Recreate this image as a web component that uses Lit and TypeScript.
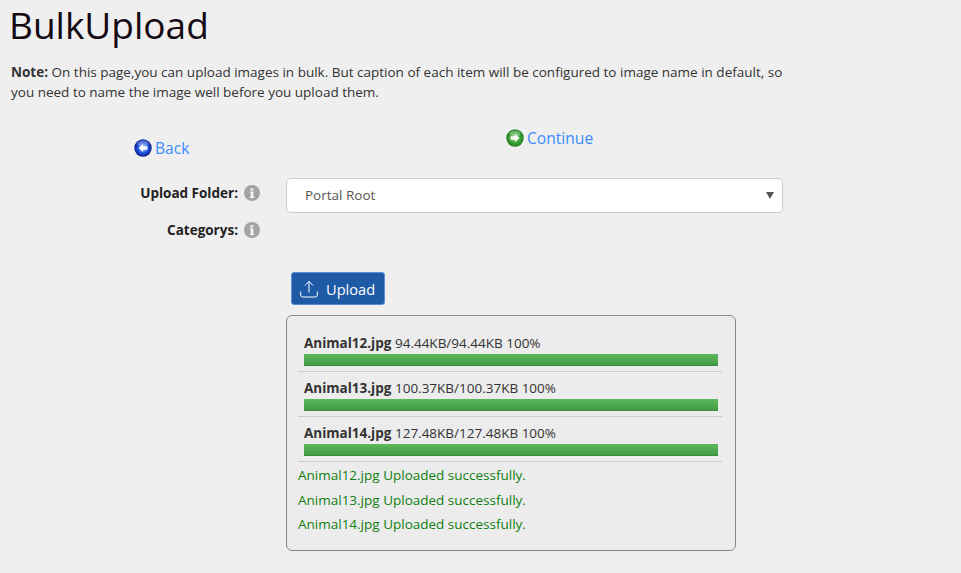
import { LitElement, html, css } from "lit";
import { customElement } from "lit/decorators.js";

const orb = (id: string, light: string, mid: string, dark: string, flip: boolean) => html`<svg class="orb" viewBox="0 0 18 18" width="18" height="18">
  <defs>
    <radialGradient id=${id} cx="50%" cy="50%" r="52%">
      <stop offset="0%" stop-color=${light}></stop>
      <stop offset="55%" stop-color=${mid}></stop>
      <stop offset="100%" stop-color=${dark}></stop>
    </radialGradient>
  </defs>
  <circle cx="9" cy="9" r="8.7" fill=${`url(#${id})`}></circle>
  <ellipse cx="9" cy="4.6" rx="5.6" ry="3" fill="#fff" opacity="0.28"></ellipse>
  <path d=${flip ? "M9 5 L4.5 9 L9 13 V10.8 H13.5 V7.2 H9 Z" : "M9 5 L13.5 9 L9 13 V10.8 H4.5 V7.2 H9 Z"} fill="#fff" opacity="0.95"></path>
</svg>`;

const info = html`<svg class="info" viewBox="0 0 16 16" width="16" height="16">
  <circle cx="8" cy="8" r="8" fill="#a3a3a3"></circle>
  <path d="M6.4 3.2h3v2.3h-3z M5.9 6.6h3.5v5.2h1v1.3H5.7v-1.3h1V7.9h-.8z" fill="#f4f4f4"></path>
</svg>`;

const items = [
  ["Animal12.jpg", "94.44KB/94.44KB 100%"],
  ["Animal13.jpg", "100.37KB/100.37KB 100%"],
  ["Animal14.jpg", "127.48KB/127.48KB 100%"],
];

@customElement("app-root")
export class AppRoot extends LitElement {
  static styles = css`
    :host {
      display: block;
      min-height: 573px;
      background: #efefef;
      font-family: "Open Sans", sans-serif;
      font-size: 13.5px;
      color: #333;
      overflow: hidden;
    }
    .page { padding: 0 0 0 11px; }
    h1 {
      margin: 0 0 0 -2px;
      font-size: 37px;
      font-weight: 400;
      line-height: 50px;
      color: #150a14;
    }
    .note {
      margin: 12px 0 0;
      width: 790px;
      line-height: 20px;
      font-size: 13.5px;
    }
    .nav { display: flex; margin: 24px 0 0 123px; height: 49px; }
    .nav a {
      display: flex;
      align-items: center;
      gap: 3px;
      color: #3b8cff;
      font-size: 15.6px;
      line-height: 22px;
      height: 22px;
    }
    .back { width: 372px; margin-top: 11px; }
    .cont { margin-top: 1px; }
    .row { display: flex; align-items: center; }
    .row label {
      width: 227px;
      text-align: right;
      font-weight: 700;
      color: #222;
      font-size: 13.5px;
    }
    .info { margin-left: 6px; flex: none; }
    .folder { height: 36px; }
    .select {
      margin: 4px 0 0 26px;
      width: 497px;
      height: 35px;
      box-sizing: border-box;
      border: 1px solid #ccc;
      border-radius: 5px;
      background: #fff;
      display: flex;
      align-items: center;
      justify-content: space-between;
      padding: 0 8px 0 18px;
      color: #555;
      font-size: 13.5px;
    }
    .arrow { width: 0; height: 0; border-left: 4px solid transparent; border-right: 4px solid transparent; border-top: 7px solid #555; }
    .cats { margin-top: 2px; height: 34px; }
    .upload {
      margin: 25px 0 0 280px;
      width: 94px;
      height: 33px;
      box-sizing: border-box;
      background: #1f5aa6;
      border: 1px solid #5b8ed6;
      border-radius: 3px;
      color: #fff;
      font-size: 14.6px;
      display: flex;
      align-items: center;
      gap: 8px;
      padding-left: 8px;
    }
    .upload svg { flex: none; }
    .panel {
      margin: 10px 0 0 275px;
      width: 450px;
      height: 236px;
      box-sizing: border-box;
      border: 1px solid #888;
      border-radius: 6px;
      background: #ececec;
      padding: 11px 13px 0 11px;
    }
    .item { border-bottom: 1px solid #ccc; height: 45px; box-sizing: border-box; padding: 6px 6px 0; }
    .line { line-height: 21px; color: #333; font-size: 13.5px; white-space: nowrap; }
    .bar {
      height: 12px;
      width: 414px;
      background: linear-gradient(#5cb85c, #449d44);
      border-bottom: 1px solid #3d8b3d;
      box-sizing: border-box;
    }
    .msgs { margin-top: 1px; }
    .msg { color: #0f800f; font-size: 13.5px; line-height: 24.5px; white-space: nowrap; }
  `;

  render() {
    return html`<div class="page">
      <h1>BulkUpload</h1>
      <p class="note"><b>Note:</b> On this page,you can upload images in bulk. But caption of each item will be configured to image name in default, so you need to name the image well before you upload them.</p>
      <div class="nav">
        <a class="back">${orb("b", "#cfe0ff", "#1f55e0", "#0a1a85", true)}Back</a>
        <a class="cont">${orb("c", "#a8dc9a", "#3fa33a", "#1c7a1c", false)}Continue</a>
      </div>
      <div class="row folder">
        <label>Upload Folder:</label>${info}
        <div class="select"><span>Portal Root</span><i class="arrow"></i></div>
      </div>
      <div class="row cats"><label>Categorys:</label>${info}</div>
      <div class="upload">
        <svg viewBox="0 0 18 18" width="18" height="18" fill="none" stroke="#fff" stroke-width="1">
          <path d="M9 12.5 V1.5 M5 5.5 L9 1.3 L13 5.5 M.7 11.5 V15 Q.7 17 2.7 17 H15.3 Q17.3 17 17.3 15 V11.5"></path>
        </svg>
        <span>Upload</span>
      </div>
      <div class="panel">
        ${items.map(([n, s]) => html`<div class="item">
          <div class="line"><b>${n}</b> ${s}</div>
          <div class="bar"></div>
        </div>`)}
        <div class="msgs">
          ${items.map(([n]) => html`<div class="msg">${n} Uploaded successfully.</div>`)}
        </div>
      </div>
    </div>`;
  }
}
